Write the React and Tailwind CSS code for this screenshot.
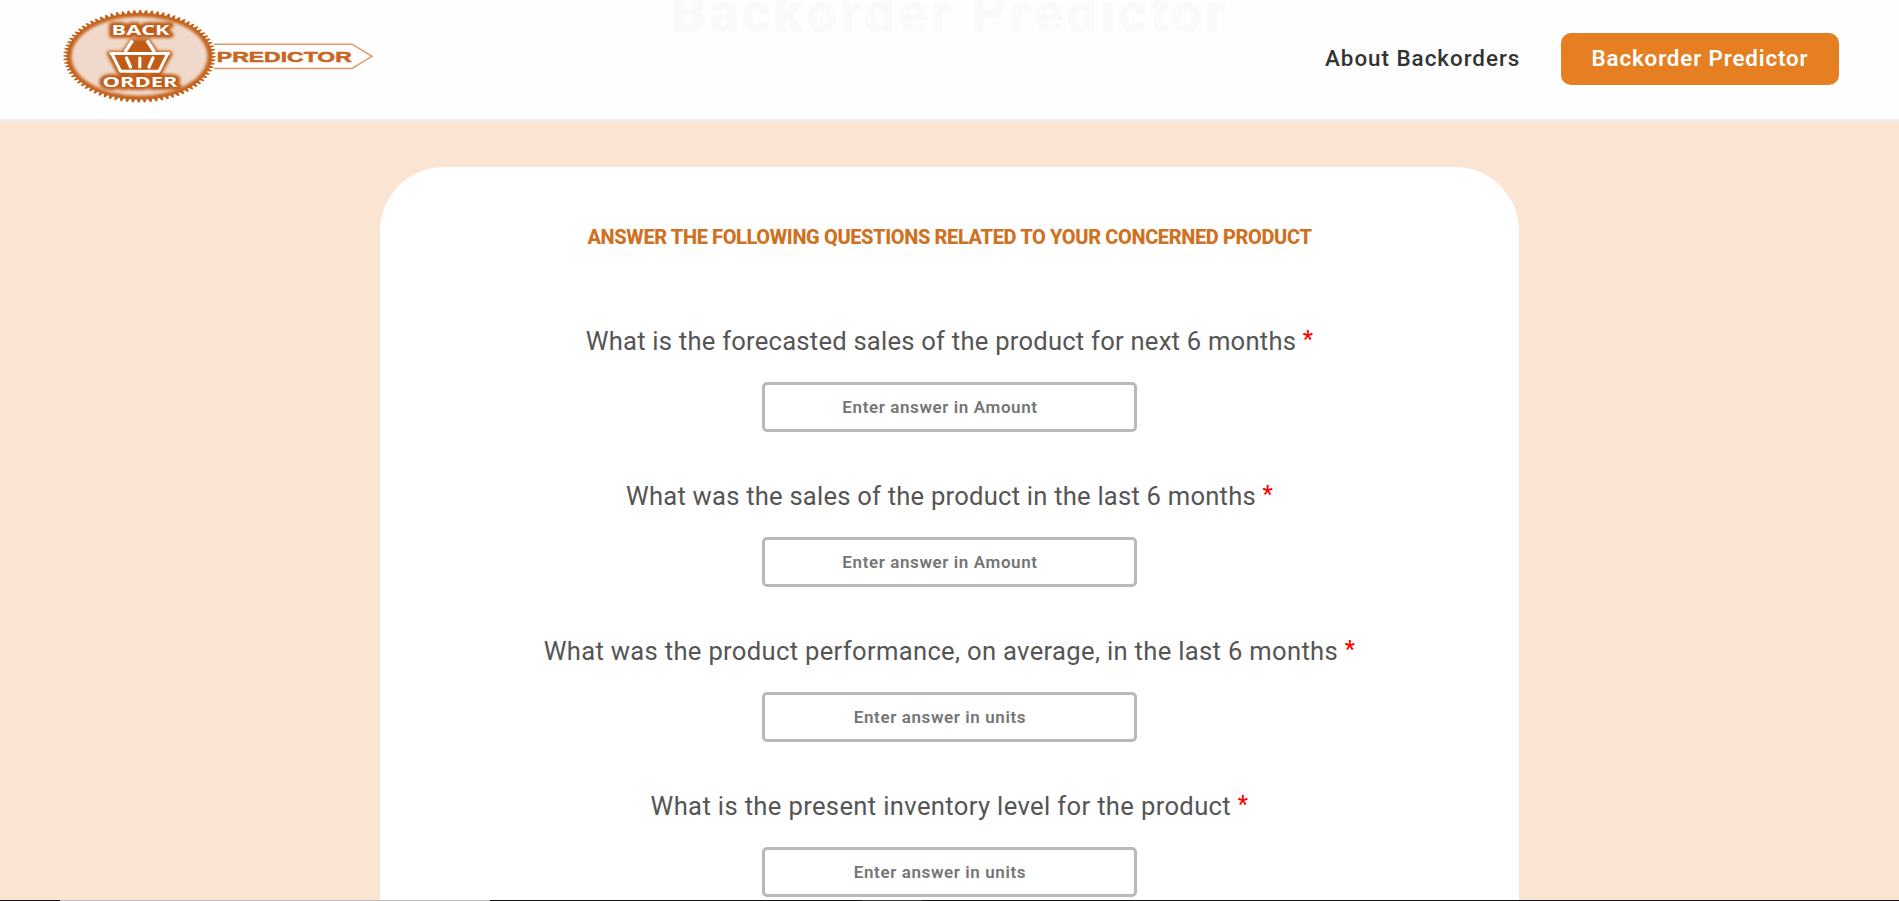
const questions = [
  ["What is the forecasted sales of the product for next 6 months", "Enter answer in Amount", "tracking-[0.23px]"],
  ["What was the sales of the product in the last 6 months", "Enter answer in Amount", "tracking-[0.22px]"],
  ["What was the product performance, on average, in the last 6 months", "Enter answer in units", "tracking-[0.32px]"],
  ["What is the present inventory level for the product", "Enter answer in units", "tracking-[0.35px]"],
];

// Toothed rim of the badge: alternate between the outer and inner radius.
const TEETH = 80;
const gear = Array.from({ length: TEETH * 4 }, (_, i) => {
  const outer = i % 4 < 2;
  const angle = (2 * Math.PI * i) / (TEETH * 4);
  const x = 139.5 + (outer ? 76.2 : 72.4) * Math.cos(angle);
  const y = 56.3 + (outer ? 46.2 : 43.2) * Math.sin(angle);
  return `${x.toFixed(2)},${y.toFixed(2)}`;
}).join(" ");

function Logo() {
  const font = { fontFamily: "Open Sans, sans-serif", fontWeight: 700 };
  const tagFont = { fontFamily: "Liberation Sans, sans-serif", fontWeight: 700 };
  const words = (
    <>
      <text x="111.5" y="35.2" fontSize="14.6" textLength="58" lengthAdjust="spacingAndGlyphs" style={font}>BACK</text>
      <text x="102.5" y="86.7" fontSize="14.6" textLength="75" lengthAdjust="spacingAndGlyphs" style={font}>ORDER</text>
    </>
  );
  return (
    <svg width="320" height="104" viewBox="60 0 320 104" className="block">
      <defs>
        <filter id="halo" x="-30%" y="-30%" width="160%" height="160%">
          <feGaussianBlur stdDeviation="1.5" />
        </filter>
      </defs>
      <path d="M214 44.2H352L372 56.3L352 68.5H214" fill="none" stroke="#dc9a68" strokeWidth="1.5" />
      <polygon points={gear} fill="#c4621b" />
      <ellipse cx="139.5" cy="56.3" rx="68" ry="39.5" fill="#f0d9ca" filter="url(#halo)" />
      <g filter="url(#halo)" fill="#c05c14" stroke="#c05c14" strokeWidth="6" strokeLinejoin="round">
        {words}
        <path d="M110 53.7H169.5L160 71H119ZM125 52L132 42H148L155 52Z" />
      </g>
      <g fill="#fff">{words}</g>
      <g fill="none" stroke="#fff" strokeWidth="3" strokeLinejoin="round">
        <path d="M109.5 53.4H170" />
        <path d="M112 54L120.5 71.2H159L167.5 54" />
        <path strokeWidth="3.4" d="M125 52L132.5 40.5M154.5 52L147 40.5" />
        <path strokeWidth="3.2" strokeLinecap="round" d="M126.5 58L130.5 67M139.8 58V67M153 58L149 67" />
      </g>
      <text x="216.8" y="61.6" fontSize="15.2" textLength="135" lengthAdjust="spacingAndGlyphs" fill="#c9661f" stroke="#c9661f" strokeWidth="0.5" style={tagFont}>PREDICTOR</text>
    </svg>
  );
}

export default function App() {
  return (
    <div className="flex h-[901px] flex-col overflow-hidden bg-[#fae5d3] font-[Roboto,sans-serif]">
      <header className="relative flex h-[121px] shrink-0 items-start justify-between border-b-2 border-[#eeeeee] bg-[#fefefe] pr-[60px] pl-[60px]">
        <div className="absolute top-[-19px] left-[671px] text-[55px] leading-[64px] font-black tracking-[3px] whitespace-nowrap text-[#fafafa]">
          Backorder Predictor
        </div>
        <Logo />
        <nav className="relative flex items-center pt-[33px] text-[22.4px] font-medium whitespace-nowrap">
          <a className="mr-[40px] w-[196px] tracking-[0.98px] text-[#333]">About Backorders</a>
          <a className="flex h-[52px] w-[278px] items-center justify-center rounded-[10px] bg-[#e67e22] font-semibold tracking-[0.85px] text-white">
            Backorder Predictor
          </a>
        </nav>
      </header>
      <main className="mx-auto mt-[46px] flex h-[733px] w-[1139px] shrink-0 flex-col items-center overflow-hidden rounded-t-[64px] bg-white pt-[56px]">
        <h1 className="h-[28px] text-[20px] leading-[28px] font-extrabold tracking-[-0.38px] whitespace-nowrap text-[#cf711f]">
          ANSWER THE FOLLOWING QUESTIONS RELATED TO YOUR CONCERNED PRODUCT
        </h1>
        <form className="flex flex-col items-center pt-[74px]">
          {questions.map(([label, hint, tracking]) => (
            <label key={label} className="flex h-[155px] shrink-0 flex-col items-center">
              <span className={`h-[57px] text-[25.6px] leading-[32px] whitespace-nowrap text-[#555] ${tracking}`}>
                {label} <span className="relative top-[-3px] text-[23px] font-medium text-[#f00]">*</span>
              </span>
              <input
                placeholder={hint}
                className="h-[50px] w-[375px] rounded-[5px] border-[3px] border-[#b9b9b9] bg-white pr-[19px] text-center text-[17px] font-semibold tracking-[0.6px] outline-none placeholder:text-[#757575]"
              />
            </label>
          ))}
        </form>
      </main>
      <div className="flex h-px shrink-0 bg-[#111]">
        <div className="ml-[60px] w-[430px] bg-[#bbb]" />
        <div className="ml-[372px] w-[60px] bg-[#333]" />
      </div>
    </div>
  );
}
